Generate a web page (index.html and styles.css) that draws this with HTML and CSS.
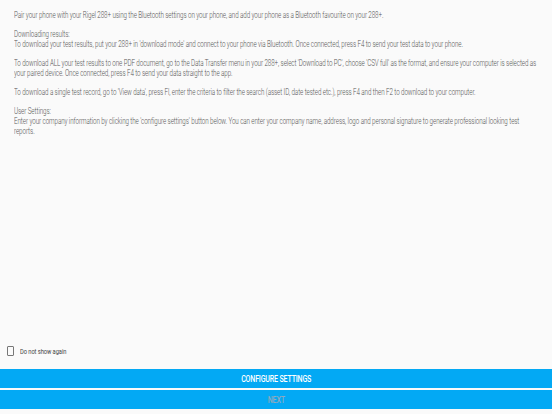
FILE: index.html
```html
<!DOCTYPE html>
<html>
<head>
<meta charset="utf-8">
<link rel="stylesheet" href="styles.css">
</head>
<body>
<div class="page">
  <div class="content">
    <div class="text">
      <p>Pair your phone with your Rigel 288+ using the Bluetooth settings on your phone, and add your phone as a Bluetooth favourite on your 288+.</p>
      <p>Downloading results:<br>To download your test results, put your 288+ in 'download mode' and connect to your phone via Bluetooth. Once connected, press F4 to send your test data to your phone.</p>
      <p>To download ALL your test results to one PDF document, go to the Data Transfer menu in your 288+, select 'Download to PC', choose 'CSV full' as the format, and ensure your computer is selected as your paired device. Once connected, press F4 to send your data straight to the app.</p>
      <p>To download a single test record, go to 'View data', press Fl, enter the criteria to filter the search (asset ID, date tested etc.), press F4 and then F2 to download to your computer.</p>
      <p>User Settings:<br>Enter your company information by clicking the 'configure settings' button below. You can enter your company name, address, logo and personal signature to generate professional looking test reports.</p>
    </div>
  </div>
  <label class="check-row"><span class="box"></span><span class="check-label">Do not show again</span></label>
  <div class="buttons">
    <div class="btn"><span class="btn-text">CONFIGURE SETTINGS</span></div>
    <div class="btn disabled"><span class="btn-text">NEXT</span></div>
  </div>
</div>
</body>
</html>
```
FILE: styles.css
```css
html, body { margin: 0; padding: 0; }
body {
  background: #fafafa;
  font-family: Roboto, "Liberation Sans", sans-serif;
  width: 552px;
  height: 414px;
  overflow: hidden;
}
.page {
  display: flex;
  flex-direction: column;
  height: 414px;
}
.content {
  flex: 1;
  padding: 10px 14px 0 14px;
  overflow: hidden;
}
.text {
  width: 703px;
  transform: scaleX(0.745);
  transform-origin: left top;
  color: #555;
  font-weight: 300;
  font-size: 8.4px;
  line-height: 10px;
  letter-spacing: -0.1px;
}
.text p { margin: 0 0 9px 0; }
.check-row {
  display: flex;
  align-items: center;
  padding: 0 0 0 7px;
  height: 12px;
  margin-bottom: 12px;
}
.box {
  width: 5px;
  height: 8px;
  border: 1px solid #777;
  border-radius: 1px;
}
.check-label {
  display: inline-block;
  margin-left: 6px;
  font-size: 8px;
  letter-spacing: -0.1px;
  color: #444;
  transform: scaleX(0.72);
  transform-origin: left center;
}
.buttons {
  display: flex;
  flex-direction: column;
  gap: 2px;
  padding-bottom: 5px;
}
.btn {
  height: 19px;
  background: #03a9f4;
  display: flex;
  align-items: center;
  justify-content: center;
}
.btn-text {
  display: inline-block;
  color: #fff;
  font-size: 8.5px;
  font-weight: 500;
  letter-spacing: -0.2px;
  transform: scaleX(0.83);
}
.btn.disabled .btn-text { color: #8fa9bd; }
```
